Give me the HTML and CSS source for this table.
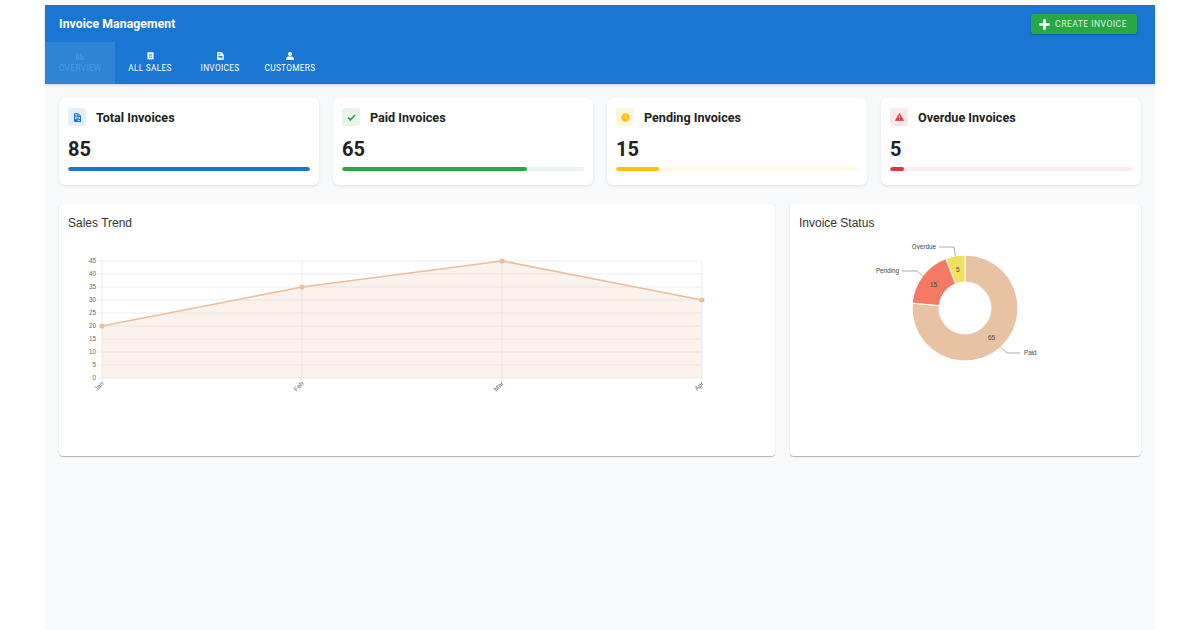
FILE: index.html
```html
<!DOCTYPE html>
<html lang="en">
<head>
<meta charset="utf-8">
<title>Invoice Management</title>
<link rel="stylesheet" href="styles.css">
</head>
<body>
<div class="app">
  <header class="appbar">
    <div class="toolbar">
      <div class="brand">Invoice Management</div>
      <button class="create-btn">
        <svg class="plus" viewBox="0 0 10 10" width="11" height="11"><path d="M5 0.3v9.4M0.3 5h9.4" stroke="#fff" stroke-width="2.3"/></svg>
        <span>CREATE INVOICE</span>
      </button>
    </div>
    <nav class="tabs">
      <div class="tab selected">
        <svg class="tab-icon" viewBox="0 0 10 8" width="9" height="8"><path d="M0.5 0v7.5H10" stroke="currentColor" stroke-width="1" fill="none"/><rect x="2" y="3" width="1.5" height="4" fill="currentColor"/><rect x="4.5" y="1.5" width="1.5" height="5.5" fill="currentColor"/><rect x="7" y="4" width="1.5" height="3" fill="currentColor"/></svg>
        <span>OVERVIEW</span>
      </div>
      <div class="tab">
        <svg class="tab-icon" viewBox="0 0 8 9" width="7" height="8"><path d="M0.5 0.3h7v8.4l-1.2-0.8-1.1 0.8-1.2-0.8-1.2 0.8-1.1-0.8-1.2 0.8z" fill="#fff"/><path d="M2 2.5h4M2 4.3h4M2 6.1h4" stroke="#1976d2" stroke-width="0.8"/></svg>
        <span>ALL SALES</span>
      </div>
      <div class="tab">
        <svg class="tab-icon" viewBox="0 0 8 10" width="7" height="8"><path d="M0 0h5l3 3v7H0z" fill="#fff"/><path d="M5 0v3h3" fill="#bcd6f2"/><path d="M1.5 2h2.5M1.5 3.5h2.5" stroke="#1976d2" stroke-width="0.8"/><rect x="1.5" y="5" width="5" height="2" fill="#1976d2"/><path d="M4 8.5h2.5" stroke="#1976d2" stroke-width="0.8"/></svg>
        <span>INVOICES</span>
      </div>
      <div class="tab">
        <svg class="tab-icon" viewBox="0 0 8 8" width="8" height="8"><circle cx="4" cy="2" r="2" fill="#fff"/><path d="M0 8c0-2.4 1.4-3.4 2.6-3.4h2.8C6.6 4.6 8 5.6 8 8z" fill="#fff"/></svg>
        <span>CUSTOMERS</span>
      </div>
    </nav>
  </header>

  <main class="content">
    <section class="stats">
      <div class="stat-card">
        <div class="stat-head">
          <span class="stat-icon icon-blue">
            <svg viewBox="0 0 8 10" width="7" height="9"><path d="M0 0h5l3 3v7H0z" fill="#1976d2"/><path d="M5 0v3h3z" fill="#9cc3ec"/><path d="M1.3 1.8h2.5M1.3 3.3h2.5" stroke="#fff" stroke-width="0.8"/><rect x="1.3" y="4.6" width="5.4" height="2.2" fill="#fff"/><rect x="1.9" y="5.1" width="4.2" height="1.2" fill="#1976d2"/><path d="M4.2 8.4h2.5" stroke="#fff" stroke-width="0.8"/></svg>
          </span>
          <span class="stat-title">Total Invoices</span>
        </div>
        <div class="stat-value">85</div>
        <div class="track track-blue"><div class="fill fill-blue" style="width:100%"></div></div>
      </div>
      <div class="stat-card">
        <div class="stat-head">
          <span class="stat-icon icon-green">
            <svg viewBox="0 0 10 8" width="9" height="7"><path d="M1 4l2.8 2.8L9 1.2" stroke="#28a745" stroke-width="1.9" fill="none"/></svg>
          </span>
          <span class="stat-title">Paid Invoices</span>
        </div>
        <div class="stat-value">65</div>
        <div class="track track-green"><div class="fill fill-green" style="width:76.5%"></div></div>
      </div>
      <div class="stat-card">
        <div class="stat-head">
          <span class="stat-icon icon-amber">
            <svg viewBox="0 0 10 10" width="9" height="9"><circle cx="5" cy="5" r="4.6" fill="#ffc107"/><path d="M5 2.4v2.8l1.6 1.1" stroke="#fff" stroke-width="1.1" fill="none" stroke-linecap="round"/></svg>
          </span>
          <span class="stat-title">Pending Invoices</span>
        </div>
        <div class="stat-value">15</div>
        <div class="track track-amber"><div class="fill fill-amber" style="width:17.6%"></div></div>
      </div>
      <div class="stat-card">
        <div class="stat-head">
          <span class="stat-icon icon-red">
            <svg viewBox="0 0 10 9" width="9" height="8"><path d="M5 0.3L9.8 8.6H0.2z" fill="#dc3545" stroke="#dc3545" stroke-width="0.5" stroke-linejoin="round"/><path d="M5 3.1v2.6" stroke="#fff" stroke-width="1.1"/><circle cx="5" cy="7.1" r="0.6" fill="#fff"/></svg>
          </span>
          <span class="stat-title">Overdue Invoices</span>
        </div>
        <div class="stat-value">5</div>
        <div class="track track-red"><div class="fill fill-red" style="width:5.9%"></div></div>
      </div>
    </section>

    <section class="charts">
      <div class="chart-card">
        <h2 class="chart-title">Sales Trend</h2>
        <svg class="chart-svg" viewBox="0 0 698 216" width="698" height="216">
          <g class="grid" stroke="#e8e8e8" stroke-width="0.8">
            <line x1="34" y1="147" x2="634" y2="147"/>
            <line x1="34" y1="134" x2="634" y2="134"/>
            <line x1="34" y1="121" x2="634" y2="121"/>
            <line x1="34" y1="108" x2="634" y2="108"/>
            <line x1="34" y1="95" x2="634" y2="95"/>
            <line x1="34" y1="82" x2="634" y2="82"/>
            <line x1="34" y1="69" x2="634" y2="69"/>
            <line x1="34" y1="56" x2="634" y2="56"/>
            <line x1="34" y1="43" x2="634" y2="43"/>
            <line x1="34" y1="30" x2="634" y2="30"/>
            <line x1="34" y1="30" x2="34" y2="151"/>
            <line x1="234" y1="30" x2="234" y2="151"/>
            <line x1="434" y1="30" x2="434" y2="151"/>
            <line x1="634" y1="30" x2="634" y2="151"/>
            <line x1="30" y1="147" x2="34" y2="147"/>
            <line x1="30" y1="134" x2="34" y2="134"/>
            <line x1="30" y1="121" x2="34" y2="121"/>
            <line x1="30" y1="108" x2="34" y2="108"/>
            <line x1="30" y1="95" x2="34" y2="95"/>
            <line x1="30" y1="82" x2="34" y2="82"/>
            <line x1="30" y1="69" x2="34" y2="69"/>
            <line x1="30" y1="56" x2="34" y2="56"/>
            <line x1="30" y1="43" x2="34" y2="43"/>
            <line x1="30" y1="30" x2="34" y2="30"/>
          </g>
          <polygon points="34,95 234,56 434,30 634,69 634,147 34,147" fill="#e9bf9d" fill-opacity="0.2"/>
          <polyline points="34,95 234,56 434,30 634,69" fill="none" stroke="#e9bf9d" stroke-width="1.6"/>
          <g fill="#e9bf9d">
            <circle cx="34" cy="95" r="2.6"/>
            <circle cx="234" cy="56" r="2.6"/>
            <circle cx="434" cy="30" r="2.6"/>
            <circle cx="634" cy="69" r="2.6"/>
          </g>
          <g class="axis-label" text-anchor="end">
            <text x="28" y="149.3">0</text>
            <text x="28" y="136.3">5</text>
            <text x="28" y="123.3">10</text>
            <text x="28" y="110.3">15</text>
            <text x="28" y="97.3">20</text>
            <text x="28" y="84.3">25</text>
            <text x="28" y="71.3">30</text>
            <text x="28" y="58.3">35</text>
            <text x="28" y="45.3">40</text>
            <text x="28" y="32.3">45</text>
          </g>
          <g class="axis-label" text-anchor="end">
            <text transform="translate(36 153) rotate(-45)">Jan</text>
            <text transform="translate(236 153) rotate(-45)">Feb</text>
            <text transform="translate(436 153) rotate(-45)">Mar</text>
            <text transform="translate(636 153) rotate(-45)">Apr</text>
          </g>
        </svg>
      </div>
      <div class="chart-card">
        <h2 class="chart-title">Invoice Status</h2>
        <svg class="chart-svg" viewBox="0 0 333 216" width="333" height="216">
          <g stroke="#fff" stroke-width="1">
            <path d="M166 24 A53 53 0 1 1 113.23 72.11 L140.11 74.6 A26 26 0 1 0 166 51 Z" fill="#e8c3a3"/>
            <path d="M113.23 72.11 A53 53 0 0 1 146.85 27.58 L156.61 52.76 A26 26 0 0 0 140.11 74.6 Z" fill="#f47a64"/>
            <path d="M146.85 27.58 A53 53 0 0 1 166 24 L166 51 A26 26 0 0 0 156.61 52.76 Z" fill="#f1e05b"/>
          </g>
          <g class="pie-value" text-anchor="middle">
            <text x="192.6" y="108.5">65</text>
            <text x="134.5" y="55.5">15</text>
            <text x="158.7" y="40.5">5</text>
          </g>
          <g stroke="#888" stroke-width="0.7" fill="none">
            <polyline points="156.3,25 155,16 140,16"/>
            <polyline points="123.7,45.1 118,40 103,40"/>
            <polyline points="201.7,116.2 208,122 221,122"/>
          </g>
          <g class="pie-label">
            <text x="137" y="18.3" text-anchor="end">Overdue</text>
            <text x="100" y="42.3" text-anchor="end">Pending</text>
            <text x="225" y="124.3">Paid</text>
          </g>
        </svg>
      </div>
    </section>
  </main>
</div>
</body>
</html>
```

FILE: styles.css
```css
* { box-sizing: border-box; }

html, body {
  margin: 0;
  padding: 0;
  background: #ffffff;
}

body {
  font-family: Roboto, "Liberation Sans", Arial, sans-serif;
  color: #212529;
}

.app {
  width: 1110px;
  margin: 5px auto 0;
  min-height: 625px;
  background: #f8f9fa;
}

.appbar {
  background: #1976d2;
  color: #fff;
  box-shadow: 0 1px 3px rgba(0, 0, 0, 0.18);
}

.toolbar {
  height: 37px;
  display: flex;
  align-items: center;
  justify-content: space-between;
  padding: 0 18px 0 14px;
}

.brand {
  font-size: 12.2px;
  font-weight: 700;
  letter-spacing: 0.1px;
  padding-top: 1px;
}

.create-btn {
  display: flex;
  align-items: center;
  gap: 5px;
  height: 20px;
  margin-top: 1px;
  padding: 0 10px 0 8px;
  border: 0;
  border-radius: 3px;
  background: #28a745;
  color: rgba(255, 255, 255, 0.88);
  font-family: Roboto, "Liberation Sans", sans-serif;
  font-size: 8.6px;
  letter-spacing: 0.45px;
  box-shadow: 0 1px 2px rgba(0, 0, 0, 0.25);
}

.plus { display: block; }

.tabs {
  display: flex;
  height: 42px;
}

.tab {
  min-width: 70px;
  padding: 10px 8px 0;
  display: flex;
  flex-direction: column;
  align-items: center;
  gap: 3px;
  font-size: 8.3px;
  letter-spacing: 0.3px;
  color: #fff;
}

.tab-icon { display: block; height: 8px; }

.tab.selected {
  background: rgba(255, 255, 255, 0.1);
  color: #4d97e0;
}

.content {
  padding: 14px 14px;
}

.stats {
  display: grid;
  grid-template-columns: repeat(4, 1fr);
  gap: 14px;
}

.stat-card {
  background: #fff;
  border-radius: 6px;
  padding: 10px 9px 14px;
  box-shadow: 0 1px 3px rgba(0, 0, 0, 0.09);
}

.stat-head {
  display: flex;
  align-items: center;
  gap: 10px;
  height: 18px;
}

.stat-icon {
  width: 18px;
  height: 18px;
  border-radius: 3px;
  display: flex;
  align-items: center;
  justify-content: center;
}

.stat-icon svg { display: block; }

.icon-blue { background: #e3effb; }
.icon-green { background: #e6f4ea; }
.icon-amber { background: #fff6df; }
.icon-red { background: #fce8ea; }

.stat-title {
  margin-top: 1px;
  font-size: 12.6px;
  font-weight: 700;
  color: #222;
}

.stat-value {
  margin-top: 11px;
  font-size: 20px;
  line-height: 24px;
  font-weight: 700;
  color: #222;
}

.track {
  margin-top: 6px;
  height: 4px;
  border-radius: 2px;
  overflow: hidden;
}

.fill { height: 100%; border-radius: 2px; }

.track-blue { background: #dbe9f8; }
.fill-blue { background: #1976d2; }
.track-green { background: #e8f5ec; }
.fill-green { background: #28a745; }
.track-amber { background: #fff8e5; }
.fill-amber { background: #ffc107; }
.track-red { background: #fdecee; }
.fill-red { background: #dc3545; }

.charts {
  margin-top: 19px;
  display: grid;
  grid-template-columns: 716fr 351fr;
  gap: 15px;
}

.chart-card {
  background: #fff;
  border-radius: 4px;
  padding: 11px 9px 9px;
  height: 252px;
  box-shadow: 0 1px 1px rgba(0, 0, 0, 0.28), 0 0 2px rgba(0, 0, 0, 0.05);
}

.chart-title {
  margin: 0;
  font-family: "Liberation Sans", Arial, sans-serif;
  font-size: 12px;
  font-weight: 400;
  line-height: 16px;
  color: #333;
}

.chart-svg {
  display: block;
}

.axis-label {
  font-family: "Liberation Sans", Arial, sans-serif;
  font-size: 6.3px;
  fill: #666;
}

.pie-value {
  font-family: "Liberation Sans", Arial, sans-serif;
  font-size: 6.5px;
  fill: #444;
}

.pie-label {
  font-family: "Liberation Sans", Arial, sans-serif;
  font-size: 6.3px;
  fill: #444;
}
```
